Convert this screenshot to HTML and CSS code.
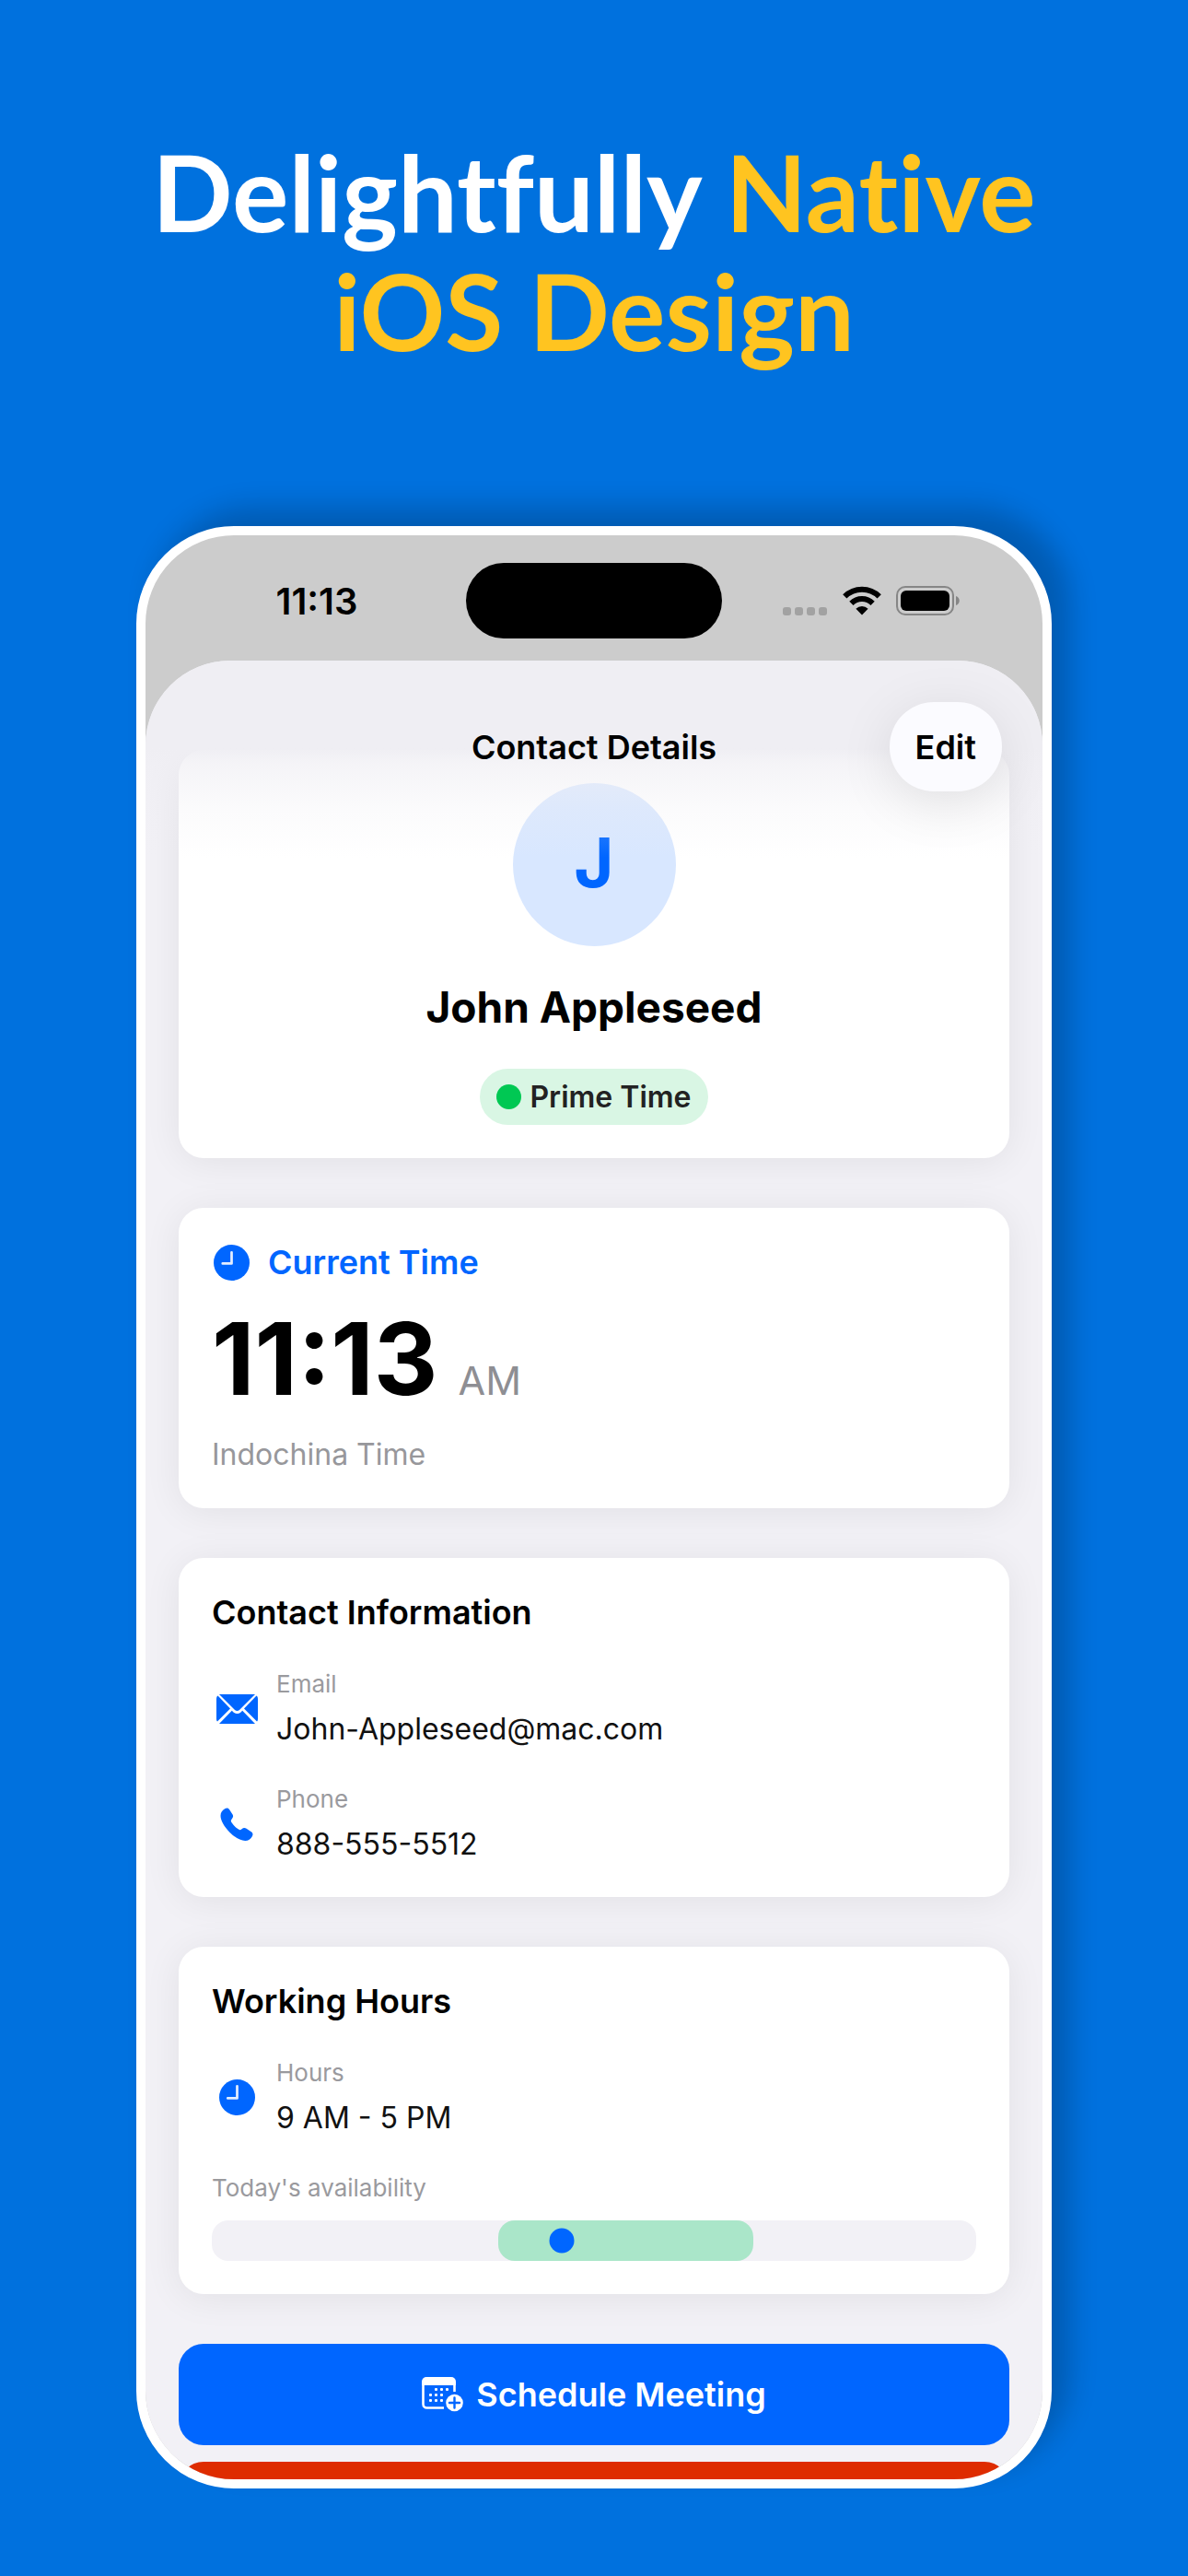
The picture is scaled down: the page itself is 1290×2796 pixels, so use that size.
FILE: index.html
```html
<!DOCTYPE html>
<html lang="en">
<head>
  <meta charset="UTF-8">
  <meta name="viewport" content="width=device-width, initial-scale=1.0">
  <title>Contact Details</title>
  <link rel="stylesheet" href="styles.css">
</head>
<body>
  <h1 class="headline">Delightfully <span class="accent">Native<br>iOS Design</span></h1>

  <main class="phone">
    <div class="status-bar">
      <div class="status-time">11:13</div>
      <div class="island"></div>
      <div class="status-icons">
        <svg width="49" height="32" viewBox="0 0 49 32" fill="#a2a2a2">
          <rect x="0" y="23" width="9" height="9" rx="3"/>
          <rect x="13" y="23" width="9" height="9" rx="3"/>
          <rect x="26" y="23" width="9" height="9" rx="3"/>
          <rect x="39" y="23" width="9" height="9" rx="3"/>
        </svg>
        <svg width="42" height="32" viewBox="0 0 42 32">
          <g fill="none" stroke="#000" stroke-width="6">
            <path d="M2.3 11.4a26.5 26.5 0 0 1 37.4 0"/>
            <path d="M9.4 18.9a16.4 16.4 0 0 1 23.2 0"/>
          </g>
          <path d="M21 31.5l-6.6-6.7a9.4 9.4 0 0 1 13.2 0z"/>
        </svg>
        <svg width="69" height="32" viewBox="0 0 69 32">
          <rect x="1" y="1" width="61" height="30" rx="9" fill="none" stroke="#868686" stroke-width="2"/>
          <rect x="5" y="5" width="53" height="22" rx="6"/>
          <path d="M65 11c5 1.500 5 8.500 0 10z" fill="#868686"/>
        </svg>
      </div>
    </div>

    <div class="sheet">
      <header class="nav">
        <h2 class="nav-title">Contact Details</h2>
        <button class="edit" type="button">Edit</button>
      </header>

      <section class="card profile">
        <div class="avatar">J</div>
        <h3 class="name">John Appleseed</h3>
        <div class="badge"><span class="badge-dot"></span>Prime Time</div>
      </section>

      <section class="card">
        <h3 class="card-title time-title">
          <svg class="clock" viewBox="0 0 40 40">
            <circle cx="20" cy="20" r="20" fill="#0066ff"/>
            <path d="M20 8.500V21H10" fill="none" stroke="#e4eeff" stroke-width="2.800" stroke-linecap="round" stroke-linejoin="round"/>
          </svg>
          Current Time
        </h3>
        <p class="clock-row"><span class="clock-time">11:13</span><span class="clock-period">AM</span></p>
        <p class="zone">Indochina Time</p>
      </section>

      <section class="card">
        <h3 class="card-title">Contact Information</h3>
        <div class="row">
          <div class="row-icon">
            <svg width="45" height="32" viewBox="0 0 45 32" fill="#0066ff">
              <path d="M3 0h39L25 17q-2.500 2.200-5 0z"/>
              <path d="M1.500 1.500 15 15.500 1 29.500Q0 28.500 0 27V4.500Q0 2.500 1.500 1.500z"/>
              <path d="M43.500 1.500 30 15.500l14 14q1-1 1-2.500V4.500q0-2-1.500-3z"/>
              <path d="M3 32 16.800 17.800l1.700 1.600q4 3.200 8 0l1.700-1.600L42 32z"/>
            </svg>
          </div>
          <div class="row-text">
            <p class="label">Email</p>
            <p class="value">John-Appleseed@mac.com</p>
          </div>
        </div>
        <div class="row">
          <div class="row-icon">
            <svg width="36" height="36" viewBox="0 0 36 36" fill="#0066ff">
              <path d="M5.500 1C7.500 0 9 .500 10.200 2.200L13.600 7.500C14.500 9.200 14.200 10.500 13 12C11.600 13.800 11.500 14.500 12.400 16C14.200 19 17 21.800 20 23.600C21.400 24.500 22.200 24.400 23.500 23.300C25.300 21.700 26.800 21.600 28.600 22.800L33.800 26.200C35.600 27.500 36 29 34.800 31.200C33.200 34.300 30.600 36 27.200 36C22.400 36 16.400 32.700 10.600 26.900C4.200 20.500 .500 13.700 .500 8.700C.500 5.200 2.400 2.600 5.500 1Z"/>
            </svg>
          </div>
          <div class="row-text">
            <p class="label">Phone</p>
            <p class="value">888-555-5512</p>
          </div>
        </div>
      </section>

      <section class="card">
        <h3 class="card-title">Working Hours</h3>
        <div class="row">
          <div class="row-icon">
            <svg class="clock" viewBox="0 0 40 40">
              <circle cx="20" cy="20" r="20" fill="#0066ff"/>
              <path d="M20 7.500V21H9.500" fill="none" stroke="#e4eeff" stroke-width="2.800" stroke-linecap="round" stroke-linejoin="round"/>
            </svg>
          </div>
          <div class="row-text">
            <p class="label">Hours</p>
            <p class="value">9 AM - 5 PM</p>
          </div>
        </div>
        <p class="label availability-label">Today's availability</p>
        <div class="availability">
          <div class="available" style="left: 37.5%; width: 33.33%"></div>
          <div class="now" style="left: 45.8%"></div>
        </div>
      </section>

      <button class="schedule" type="button">
        <svg width="45" height="38" viewBox="0 0 45 38">
          <path d="M1.500 8V29.500a4 4 0 0 0 4 4H24M35.500 8V16" fill="none" stroke="#fff" stroke-width="2.600"/>
          <path d="M0 9V5a5 5 0 0 1 5-5H32a5 5 0 0 1 5 5V9z" fill="#fff"/>
          <g fill="#fff">
            <rect x="14" y="12" width="3" height="3" rx="1"/><rect x="20" y="12" width="3" height="3" rx="1"/><rect x="26" y="12" width="3" height="3" rx="1"/>
            <rect x="8" y="18" width="3" height="3" rx="1"/><rect x="14" y="18" width="3" height="3" rx="1"/><rect x="20" y="18" width="3" height="3" rx="1"/>
            <rect x="8" y="24" width="3" height="3" rx="1"/><rect x="14" y="24" width="3" height="3" rx="1"/><rect x="20" y="24" width="3" height="3" rx="1"/>
          </g>
          <circle cx="35.500" cy="28" r="9.300" fill="#fff"/>
          <path d="M35.500 22.500v11M30 28h11" stroke="#0066ff" stroke-width="2.400" stroke-linecap="round"/>
        </svg>
        Schedule Meeting
      </button>
      <div class="danger"></div>
    </div>
  </main>
</body>
</html>
```
FILE: styles.css
```css
* {
  box-sizing: border-box;
}
body {
  display: flex;
  flex-direction: column;
  height: 100vh;
  margin: 0;
  padding: 143px 148px 95px;
  background-color: #0071de;
  color: #000;
  font-family: Inter, "Liberation Sans", sans-serif;
}
h1, h2, h3, p {
  margin: 0;
}
button {
  border: 0;
  font-family: inherit;
  cursor: pointer;
}

.headline {
  margin-bottom: 170px;
  color: #fff;
  font-family: Lato, sans-serif;
  font-size: 115px;
  font-variant-ligatures: none;
  font-weight: 700;
  line-height: 129px;
  text-align: center;
}
.accent {
  color: #ffc420;
}

.phone {
  display: flex;
  flex: 1;
  flex-direction: column;
  min-height: 0;
  overflow: hidden;
  border: 10px solid #fff;
  border-radius: 106px;
  background-color: #ccc;
  box-shadow: 20px -20px 30px rgba(0, 0, 0, 0.2);
}

.status-bar {
  display: grid;
  flex-shrink: 0;
  grid-template-columns: 1fr auto 1fr;
  align-items: center;
  padding: 30px 0 24px;
}
.status-time {
  padding-left: 24px;
  font-size: 40px;
  font-weight: 600;
  text-align: center;
}
.island {
  width: 278px;
  height: 82px;
  border-radius: 41px;
  background-color: #000;
}
.status-icons {
  display: flex;
  justify-content: center;
  gap: 16px;
  padding-right: 24px;
}

.sheet {
  position: relative;
  display: flex;
  flex: 1;
  flex-direction: column;
  gap: 54px;
  min-height: 0;
  padding: 97px 36px 0;
  overflow: hidden;
  border-radius: 92px 92px 0 0;
  background-color: #f2f1f6;
}
.sheet > * {
  flex-shrink: 0;
}

/* floats over the scrolled content */
.nav {
  position: absolute;
  top: 0;
  left: 0;
  right: 0;
  z-index: 1;
  display: grid;
  grid-template-columns: 1fr auto 1fr;
  align-items: center;
  padding: 45px 44px 72px;
  background: linear-gradient(#efeef3 0, #efeef3 94px, rgba(239, 238, 243, 0.65) 112px, rgba(239, 238, 243, 0.25) 160px, rgba(239, 238, 243, 0));
}
.nav-title {
  grid-column: 2;
  font-size: 36px;
  font-weight: 600;
}
.edit {
  justify-self: end;
  height: 97px;
  padding: 0 28px;
  border-radius: 48px;
  background-color: #fbfbff;
  box-shadow: 0 12px 60px rgba(0, 0, 0, 0.1);
  color: #000;
  font-size: 36px;
  font-weight: 600;
}

.card {
  padding: 36px;
  border-radius: 27px;
  background-color: #fff;
  box-shadow: 0 4px 40px rgba(0, 0, 0, 0.07);
}
.card-title {
  font-size: 36px;
  font-weight: 600;
  line-height: 46px;
}

.profile {
  display: flex;
  flex-direction: column;
  align-items: center;
  gap: 36px;
}
.avatar {
  width: 177px;
  height: 177px;
  border-radius: 50%;
  background-color: #d8e7ff;
  color: #0066ff;
  font-size: 74px;
  font-weight: 700;
  line-height: 173px;
  text-align: center;
}
.name {
  font-size: 46px;
  font-weight: 700;
  line-height: 61px;
}
.badge {
  display: flex;
  align-items: center;
  gap: 9px;
  padding: 0 18px;
  border-radius: 31px;
  background-color: #d9f6e4;
  color: #222;
  font-size: 32px;
  font-weight: 600;
  line-height: 61px;
}
.badge-dot {
  width: 27px;
  height: 27px;
  border-radius: 50%;
  background-color: #00c853;
}

.time-title {
  display: flex;
  align-items: center;
  gap: 20px;
  padding-left: 2px;
  color: #0066ff;
}
.clock {
  width: 39px;
  height: 39px;
}
.clock-row {
  display: flex;
  align-items: baseline;
  gap: 22px;
  margin: 18px 0;
}
.clock-time {
  font-size: 108px;
  font-weight: 700;
  line-height: 128px;
}
.clock-period {
  color: #8e8e93;
  font-size: 43px;
}
.zone {
  color: #97979b;
  font-size: 32px;
  line-height: 44px;
}

.row {
  display: flex;
  align-items: center;
  gap: 16px;
  margin-top: 38px;
}
.row-icon {
  display: flex;
  justify-content: center;
  width: 54px;
}
.label {
  color: #9a9a9e;
  font-size: 26px;
  line-height: 34px;
}
.value {
  margin-top: 11px;
  color: #111;
  font-size: 32px;
  line-height: 42px;
}

.availability-label {
  margin-top: 38px;
}
.availability {
  position: relative;
  height: 44px;
  margin-top: 18px;
  border-radius: 18px;
  background-color: #f2f1f6;
}
.available {
  position: absolute;
  top: 0;
  bottom: 0;
  border-radius: 18px;
  background-color: #aae6c9;
}
.now {
  position: absolute;
  top: 50%;
  width: 27px;
  height: 27px;
  border-radius: 50%;
  background-color: #0066ff;
  transform: translate(-50%, -50%);
}

.schedule {
  display: flex;
  align-items: center;
  justify-content: center;
  gap: 14px;
  height: 110px;
  border-radius: 27px;
  background-color: #0066ff;
  color: #fff;
  font-size: 36px;
  font-weight: 600;
}
.danger {
  height: 110px;
  margin-top: -36px;
  border-radius: 27px;
  background-color: #de2c00;
}
```
